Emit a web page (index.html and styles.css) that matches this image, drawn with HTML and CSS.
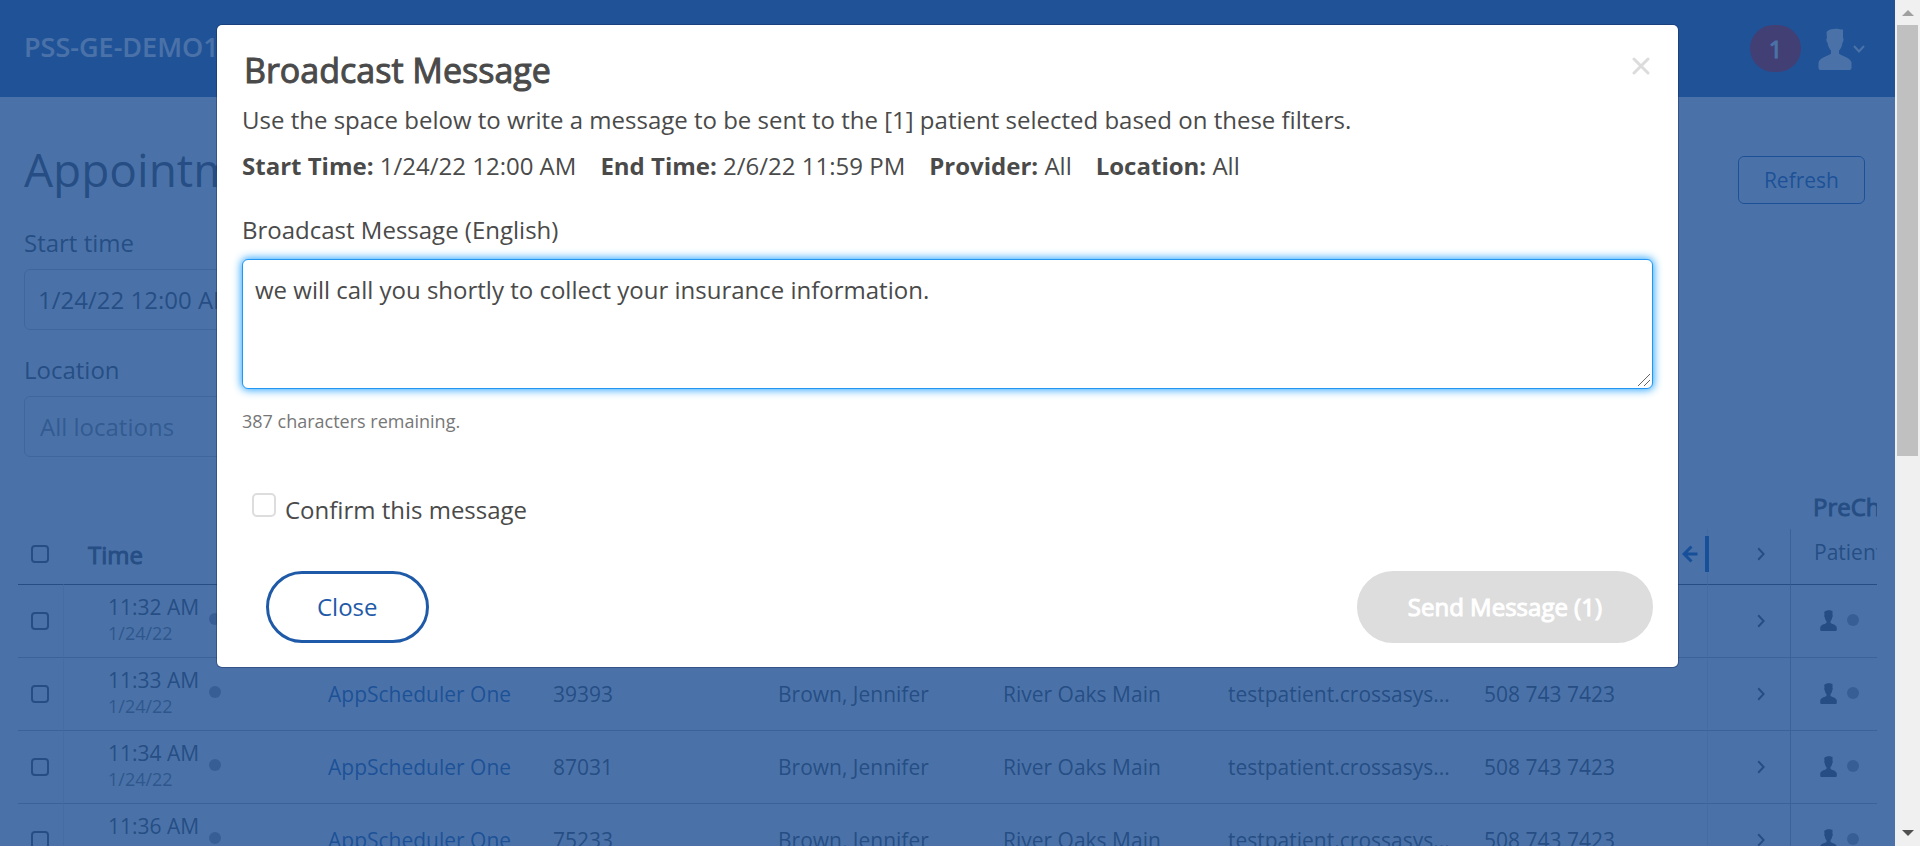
FILE: index.html
```html
<!DOCTYPE html>
<html lang="en">
<head>
<meta charset="utf-8">
<title>Appointments</title>
<link rel="stylesheet" href="styles.css">
</head>
<body>
<svg class="sprite" aria-hidden="true">
  <symbol id="person" viewBox="0 0 34 42">
    <path d="M8.500 4C11 .5 19 0 23 1.500H25V10C26 10.500 25.500 14 24.500 14.500 24 18.500 22.500 21 21 22.500V25.500C22 28 32 28.500 33.500 34.500V40Q33.500 42 31.500 42H2.500Q.5 42 .5 40V34.500C2 28.500 12 28 13 25.500V22.500C11.500 21 10 18.500 9.500 14.500 8.300 14 8 10.500 9 10 8.800 8 8.500 6 8.500 4Z" fill="currentColor"/>
  </symbol>
  <symbol id="right" viewBox="0 0 8 14">
    <path d="M1.200 1.200 6.600 7 1.200 12.800" fill="none" stroke="currentColor" stroke-width="2"/>
  </symbol>
</svg>
<div class="window">
  <div class="page">
    <header class="topbar">
      <span class="brand">PSS-GE-DEMO1</span>
      <div class="account">
        <span class="badge">1</span>
        <button class="user" aria-label="Account menu">
          <svg class="user-icon"><use href="#person"/></svg>
          <svg class="user-caret" viewBox="0 0 12 8"><path d="M1 1 6 6.500 11 1" fill="none" stroke="currentColor" stroke-width="2"/></svg>
        </button>
      </div>
    </header>
    <main class="content">
      <div class="heading">
        <h1 class="page-title">Appointments</h1>
        <button class="refresh">Refresh</button>
      </div>
      <div class="filters">
        <label class="label" for="start">Start time</label>
        <input class="field" id="start" type="text" value="1/24/22 12:00 AM">
        <label class="label" for="location">Location</label>
        <input class="field field-location" id="location" type="text" placeholder="All locations">
      </div>
    </main>
    <div class="grid-wrap">
      <table class="grid">
        <colgroup>
          <col class="c-check"><col class="c-time"><col class="c-name"><col class="c-id"><col class="c-provider"><col class="c-location"><col class="c-mail"><col class="c-phone"><col class="c-expand"><col class="c-pre">
        </colgroup>
        <thead>
          <tr class="group-row"><th colspan="9"></th><th class="group">PreCheck</th></tr>
          <tr class="head-row">
            <th class="check"><input type="checkbox" aria-label="Select all"></th>
            <th class="time-head">Time</th>
            <th></th><th></th><th></th><th></th><th></th>
            <th class="phone"><span class="collapse"><svg class="collapse-icon" viewBox="0 0 16 18"><path d="M9.500 1.500 2 9l7.500 7.500M2 9h13.500" fill="none" stroke="currentColor" stroke-width="3"/></svg><span class="collapse-bar"></span></span></th>
            <th class="expand"><svg class="chev"><use href="#right"/></svg></th>
            <th class="sub">Patient</th>
          </tr>
        </thead>
        <tbody>
          <tr>
            <td class="check"><input type="checkbox" aria-label="Select 11:32 AM"></td>
            <td class="time"><div class="when"><span>11:32 AM<small>1/24/22</small></span><i class="dot"></i></div></td>
            <td></td><td></td><td></td><td></td><td></td><td class="phone"></td>
            <td class="expand"><svg class="chev"><use href="#right"/></svg></td>
            <td class="pre"><div class="status"><svg class="pre-icon"><use href="#person"/></svg><i class="dot"></i></div></td>
          </tr>
          <tr>
            <td class="check"><input type="checkbox" aria-label="Select 11:33 AM"></td>
            <td class="time"><div class="when"><span>11:33 AM<small>1/24/22</small></span><i class="dot"></i></div></td>
            <td><a href="#">AppScheduler One</a></td><td>39393</td><td>Brown, Jennifer</td><td>River Oaks Main</td><td>testpatient.crossasys...</td><td class="phone">508 743 7423</td>
            <td class="expand"><svg class="chev"><use href="#right"/></svg></td>
            <td class="pre"><div class="status"><svg class="pre-icon"><use href="#person"/></svg><i class="dot"></i></div></td>
          </tr>
          <tr>
            <td class="check"><input type="checkbox" aria-label="Select 11:34 AM"></td>
            <td class="time"><div class="when"><span>11:34 AM<small>1/24/22</small></span><i class="dot"></i></div></td>
            <td><a href="#">AppScheduler One</a></td><td>87031</td><td>Brown, Jennifer</td><td>River Oaks Main</td><td>testpatient.crossasys...</td><td class="phone">508 743 7423</td>
            <td class="expand"><svg class="chev"><use href="#right"/></svg></td>
            <td class="pre"><div class="status"><svg class="pre-icon"><use href="#person"/></svg><i class="dot"></i></div></td>
          </tr>
          <tr>
            <td class="check"><input type="checkbox" aria-label="Select 11:36 AM"></td>
            <td class="time"><div class="when"><span>11:36 AM<small>1/24/22</small></span><i class="dot"></i></div></td>
            <td><a href="#">AppScheduler One</a></td><td>75233</td><td>Brown, Jennifer</td><td>River Oaks Main</td><td>testpatient.crossasys...</td><td class="phone">508 743 7423</td>
            <td class="expand"><svg class="chev"><use href="#right"/></svg></td>
            <td class="pre"><div class="status"><svg class="pre-icon"><use href="#person"/></svg><i class="dot"></i></div></td>
          </tr>
        </tbody>
      </table>
    </div>
    <div class="overlay">
      <section class="dialog" role="dialog" aria-labelledby="dialog-title">
        <div class="dialog-head">
          <h2 class="dialog-title" id="dialog-title">Broadcast Message</h2>
          <button class="dismiss" aria-label="Dismiss"><svg class="dismiss-icon" viewBox="0 0 18 18"><path d="M2 2l14 14M16 2 2 16" stroke="currentColor" stroke-width="3" stroke-linecap="round"/></svg></button>
        </div>
        <p class="intro">Use the space below to write a message to be sent to the [1] patient selected based on these filters.</p>
        <p class="summary"><span><b>Start Time:</b> 1/24/22 12:00 AM</span><span><b>End Time:</b> 2/6/22 11:59 PM</span><span><b>Provider:</b> All</span><span><b>Location:</b> All</span></p>
        <label class="message-label" for="message">Broadcast Message (English)</label>
        <div class="message-box">
          <textarea class="message" id="message">we will call you shortly to collect your insurance information.</textarea>
          <svg class="grip" viewBox="0 0 12 12" aria-hidden="true"><path d="M0 12 12 0M6 12l6-6" stroke="currentColor"/></svg>
        </div>
        <p class="remaining">387 characters remaining.</p>
        <label class="confirm"><input type="checkbox"><span>Confirm this message</span></label>
        <div class="actions">
          <button class="pill close">Close</button>
          <button class="pill send" disabled>Send Message (1)</button>
        </div>
      </section>
    </div>
  </div>
  <div class="scrollbar" aria-hidden="true">
    <svg class="arrow up" viewBox="0 0 12 6"><path d="M0 6 6 0l6 6z" fill="currentColor"/></svg>
    <div class="thumb"></div>
    <svg class="arrow down" viewBox="0 0 12 6"><path d="M0 0h12L6 6z" fill="currentColor"/></svg>
  </div>
</div>
</body>
</html>
```
FILE: styles.css
```css
* { box-sizing: border-box; }
body { margin: 0; font: 24px/32px "Open Sans", sans-serif; color: #4a4a4a; }
button, input, textarea { font: inherit; color: inherit; margin: 0; }
h1, h2, p { margin: 0; }
.sprite { position: absolute; width: 0; height: 0; }

.window { display: grid; grid-template-columns: minmax(0, 1fr) 25px; height: 100vh; overflow: hidden; }
.page { position: relative; overflow: hidden; background: #fff; }

.topbar { display: flex; justify-content: space-between; align-items: center; height: 97px; padding: 0 30px 0 24px; background: #2b5eab; color: #fff; }
.brand { padding-bottom: 4px; font-size: 27px; font-weight: 600; }
.account { display: flex; align-items: center; gap: 17px; }
.badge { width: 51px; height: 47px; border-radius: 24px; background: #d40000; text-align: center; line-height: 48px; -webkit-text-stroke: 1px; }
.user { display: flex; align-items: center; gap: 1px; padding: 0; border: 0; background: none; color: #fff; }
.user-icon { width: 34px; height: 42px; }
.user-caret { width: 12px; height: 8px; }

.content { padding: 44px 30px 0 24px; }
.heading { display: flex; justify-content: space-between; align-items: flex-start; }
.page-title { font-size: 46px; line-height: 56px; font-weight: 400; }
.refresh { height: 48px; margin-top: 15px; padding: 0 25px; border: 1px solid #1f5aa8; border-radius: 6px; background: none; color: #1f5aa8; font-size: 21px; line-height: 44px; }
.filters { display: flex; flex-direction: column; width: 360px; padding-top: 23px; }
.label { margin-bottom: 10px; }
.field { height: 61px; margin-bottom: 24px; padding: 0 13px; border: 1px solid #c8c8c8; border-radius: 6px; background: none; }
.field-location { padding: 0 15px; }
.field::placeholder { color: #8c8c8c; opacity: 1; }

.grid-wrap { margin: 4px 18px 0; overflow: hidden; }
.grid { width: 1930px; table-layout: fixed; border-collapse: separate; border-spacing: 0; font-size: 21px; line-height: 28px; }
.c-check { width: 46px; }
.c-time { width: 264px; }
.c-name { width: 225px; }
.c-id { width: 225px; }
.c-provider { width: 225px; }
.c-location { width: 225px; }
.c-mail { width: 256px; }
.c-phone { width: 224px; }
.c-expand { width: 83px; }
.grid th, .grid td { padding: 0; text-align: left; white-space: nowrap; }
.grid td { height: 73px; border-bottom: 1px solid #b4b4b4; }
.grid .group { padding-left: 22px; font-size: 24px; font-weight: 400; -webkit-text-stroke: 1px; }
.group-row th { height: 44px; }
.grid .head-row th { height: 56px; padding-bottom: 6px; border-bottom: 1px solid #4a4a4a; }
.grid .head-row .time-head { padding: 0 0 4px 24px; font-size: 24px; font-weight: 400; -webkit-text-stroke: 1px; }
.grid .head-row .sub { padding: 0 0 10px 23px; font-weight: 400; }
.check { border-right: 1px solid #e4e4e4; }
.grid .head-row .check { border-right-color: transparent; }
.check input { display: block; appearance: none; width: 18px; height: 18px; margin-left: 13px; border: 2px solid #4a4a4a; border-radius: 4px; }
.when { display: flex; align-items: center; gap: 10px; padding: 0 0 5px 44px; }
.when small { display: block; font-size: 18px; line-height: 24px; color: #777; }
.dot { display: inline-block; width: 12px; height: 12px; border-radius: 50%; background: #a0a0a0; }
.grid a { color: #1f5aa8; text-decoration: none; }
.phone { border-right: 1px solid #e4e4e4; }
.expand { border-right: 1px solid #b4b4b4; }
.collapse { display: flex; justify-content: flex-end; align-items: center; gap: 7px; margin-right: -2px; color: #004fb0; }
.collapse-icon { width: 16px; height: 18px; }
.collapse-bar { width: 4px; height: 36px; background: currentColor; }
.chev { display: block; width: 8px; height: 14px; margin-left: 49px; }
.status { display: flex; align-items: center; gap: 10px; padding: 0 0 2px 29px; }
.pre-icon { width: 17px; height: 21px; }

.overlay { position: absolute; inset: 0; padding: 25px 217px; background: rgba(29, 79, 146, .8); }
.dialog { padding: 24px 25px; border-radius: 5px; background: #fff; box-shadow: 0 0 0 1px rgba(20, 40, 90, .4); }
.dialog-head { display: flex; justify-content: space-between; align-items: flex-start; }
.dialog-title { padding-left: 2px; font-size: 34px; line-height: 42px; font-weight: 400; -webkit-text-stroke: 1px; }
.dismiss { display: flex; margin: 8px 3px 0; padding: 0; border: 0; background: none; color: #dcdcdc; }
.dismiss-icon { width: 18px; height: 18px; }
.intro { margin-top: 13px; }
.summary { display: flex; flex-wrap: wrap; gap: 0 24px; margin-top: 14px; }
.message-label { display: block; margin-top: 32px; }
.message-box { position: relative; margin-top: 13px; }
.message { display: block; width: 100%; height: 130px; padding: 14px 12px; border: 1px solid #2196f3; border-radius: 6px; outline: 0; box-shadow: 0 0 8px 1px #2aa5ff; resize: none; }
.grip { position: absolute; right: 3px; bottom: 3px; width: 12px; height: 12px; color: #666; }
.remaining { margin-top: 16px; font-size: 18px; line-height: 32px; color: #777; }
.confirm { display: flex; width: max-content; margin-top: 56px; padding-left: 10px; gap: 9px; }
.confirm input { appearance: none; width: 24px; height: 24px; border: 2px solid #ddd; border-radius: 5px; }
.confirm span { padding-top: 1px; }
.actions { display: flex; justify-content: space-between; margin-top: 45px; padding-left: 24px; }
.pill { height: 72px; padding: 0 48px; border: 3px solid #1f5aa8; border-radius: 36px; background: #fff; color: #1f5aa8; }
.pill.send { border-color: #ddd; background: #ddd; color: #fff; -webkit-text-stroke: 1px; }

.scrollbar { display: flex; flex-direction: column; align-items: center; background: #f0f0f0; }
.arrow { width: 12px; height: 6px; }
.up { margin: 10px 0 9px; color: #a0a0a0; }
.down { margin: auto 0 10px; color: #505050; }
.thumb { width: 21px; height: 51%; background: #c0c0c0; }
```
